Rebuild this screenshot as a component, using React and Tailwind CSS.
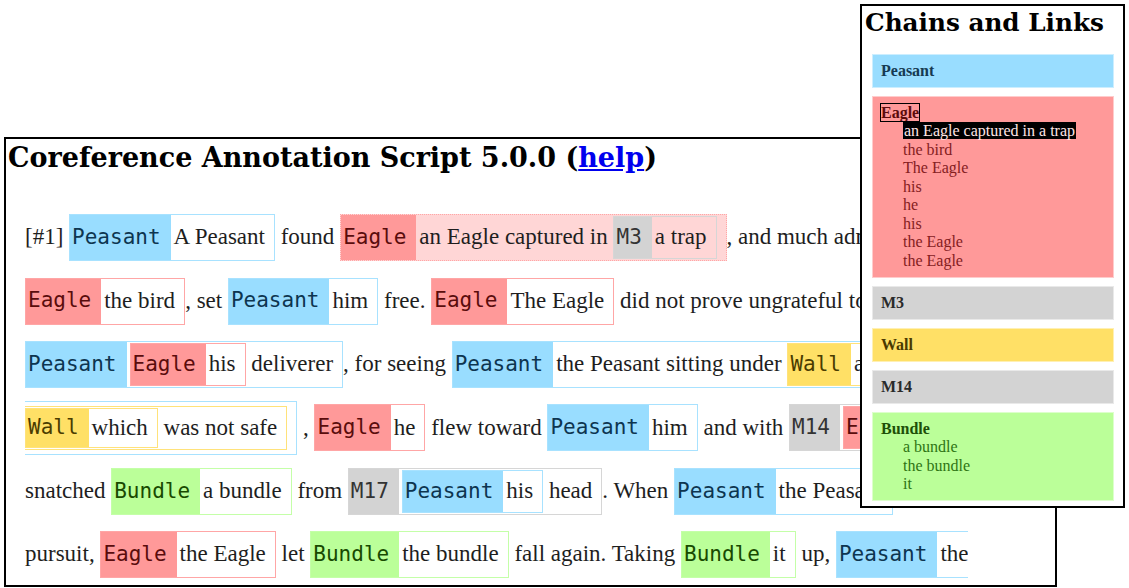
import clsx from "clsx";

const CH = {
  Peasant: { bg: "bg-[#99ddff]", border: "border-[#a8e2ff]", text: "text-[#0d3550]" },
  Eagle: { bg: "bg-[#ff9999]", border: "border-[#ffa6a6]", text: "text-[#5a0c0c]" },
  M3: { bg: "bg-[#d3d3d3]", border: "border-[#d6d6d6]", text: "text-[#333333]" },
  M14: { bg: "bg-[#d3d3d3]", border: "border-[#d6d6d6]", text: "text-[#333333]" },
  M17: { bg: "bg-[#d3d3d3]", border: "border-[#d6d6d6]", text: "text-[#333333]" },
  Wall: { bg: "bg-[#ffe066]", border: "border-[#ffe27a]", text: "text-[#4a3c00]" },
  Bundle: { bg: "bg-[#bbff99]", border: "border-[#c4ffa8]", text: "text-[#184a00]" },
};

// one mention: coloured chain label, then the mention text inside a chain-coloured frame
function M({ c, h = "h-[47px]", sel, open, noLabel, children }) {
  const s = CH[c];
  return (
    <span
      className={clsx(
        "inline-flex shrink-0 items-stretch border",
        h,
        s.border,
        sel && "border-dotted bg-[#ffd6d6]",
        open && "border-l-0"
      )}
    >
      {!noLabel && (
        <span
          className={clsx(
            "flex items-center pl-[2px] pr-[10px] font-['DejaVu_Sans_Mono',monospace] text-[21px]",
            s.bg,
            s.text
          )}
        >
          {c}
        </span>
      )}
      <span className={clsx("flex items-center pr-[9px]", open ? "pl-0" : "pl-[3px]")}>{children}</span>
    </span>
  );
}

function Row({ children }) {
  return <div className="flex h-[63.4px] items-center whitespace-pre">{children}</div>;
}

const chains = [
  { name: "Peasant", bg: "bg-[#99ddff]", text: "text-[#163a52]", items: [] },
  {
    name: "Eagle",
    bg: "bg-[#ff9999]",
    text: "text-[#5c0b0b]",
    sub: "text-[#85201f]",
    selected: true,
    items: ["an Eagle captured in a trap", "the bird", "The Eagle", "his", "he", "his", "the Eagle", "the Eagle"],
  },
  { name: "M3", bg: "bg-[#d3d3d3]", text: "text-[#2a2a2a]", items: [] },
  { name: "Wall", bg: "bg-[#ffe066]", text: "text-[#4a3a00]", items: [] },
  { name: "M14", bg: "bg-[#d3d3d3]", text: "text-[#2a2a2a]", items: [] },
  {
    name: "Bundle",
    bg: "bg-[#bbff99]",
    text: "text-[#1d4f08]",
    sub: "text-[#2e7414]",
    items: ["a bundle", "the bundle", "it"],
  },
];

export default function App() {
  return (
    <div className="relative h-[588px] w-[1129px] overflow-hidden bg-white">
      <div className="ml-[4px] mt-[137px] h-[450px] w-[1053px] overflow-hidden border-2 border-black">
        <div className="w-[962px] overflow-hidden">
          <h1 className="mt-[2px] pl-[2px] font-['DejaVu_Serif',serif] text-[27px] font-bold leading-[33px] text-black">
            Coreference Annotation Script 5.0.0 (
            <a href="#" className="text-[#0000ee] underline">
              help
            </a>
            )
          </h1>
          <div className="mt-[32px] pl-[19px] font-['Liberation_Serif',serif] text-[23px] text-[#1e1e1e]">
            <Row>
              {"[#1] "}
              <M c="Peasant">A Peasant</M>
              {" found "}
              <M c="Eagle" sel>
                {"an Eagle captured in "}
                <M c="M3" h="h-[43px]">a trap</M>
              </M>
              {", and much admiring "}
            </Row>
            <Row>
              <M c="Eagle">the bird</M>
              {", set "}
              <M c="Peasant">him</M>
              {" free. "}
              <M c="Eagle">The Eagle</M>
              {" did not prove ungrateful to "}
            </Row>
            <Row>
              <M c="Peasant">
                <M c="Eagle" h="h-[43px]">his</M>
                {" deliverer"}
              </M>
              {", for seeing "}
              <M c="Peasant">
                {"the Peasant sitting under "}
                <M c="Wall" h="h-[43px]">a wall</M>
              </M>
            </Row>
            <Row>
              <M c="Peasant" h="h-[54px]" open noLabel>
                <M c="Wall" h="h-[44px]" open noLabel>
                  <M c="Wall" h="h-[40px]">which</M>
                  {" was not safe"}
                </M>
              </M>
              {" , "}
              <M c="Eagle">he</M>
              {" flew toward "}
              <M c="Peasant">him</M>
              {" and with "}
              <M c="M14">
                <M c="Eagle" h="h-[43px]">his</M>
                {" talons"}
              </M>
            </Row>
            <Row>
              {"snatched "}
              <M c="Bundle">a bundle</M>
              {" from "}
              <M c="M17">
                <M c="Peasant" h="h-[43px]">his</M>
                {" head"}
              </M>
              {". When "}
              <M c="Peasant">the Peasant</M>
              {" rose in"}
            </Row>
            <Row>
              {"pursuit, "}
              <M c="Eagle">the Eagle</M>
              {" let "}
              <M c="Bundle">the bundle</M>
              {" fall again. Taking "}
              <M c="Bundle">it</M>
              {" up, "}
              <M c="Peasant">the man</M>
              {" returned to the same place"}
            </Row>
          </div>
        </div>
      </div>

      <div className="absolute left-[860px] top-[4px] h-[504px] w-[265px] border-2 border-black bg-white">
        <h2 className="mt-[2px] pl-[3px] font-['DejaVu_Serif',serif] text-[24.7px] font-bold leading-[29px] text-black">
          Chains and Links
        </h2>
        <div className="ml-[10px] mr-[9px] mt-[17px] flex flex-col gap-[8.5px] font-['Liberation_Serif',serif] text-[16px] leading-[18.5px]">
          {chains.map((ch) => (
            <div key={ch.name} className={clsx("border border-white/50 px-[8px] py-[6.5px]", ch.bg)}>
              <div className={clsx("font-bold", ch.text)}>
                {ch.selected ? (
                  <span className="outline outline-1 outline-black">{ch.name}</span>
                ) : (
                  ch.name
                )}
              </div>
              {ch.items.map((it, i) => (
                <div key={i} className={clsx("pl-[22px]", ch.sub)}>
                  {ch.selected && i === 0 ? (
                    <span className="bg-black px-px text-[#ffe6e6]">{it}</span>
                  ) : (
                    it
                  )}
                </div>
              ))}
            </div>
          ))}
        </div>
      </div>
    </div>
  );
}
